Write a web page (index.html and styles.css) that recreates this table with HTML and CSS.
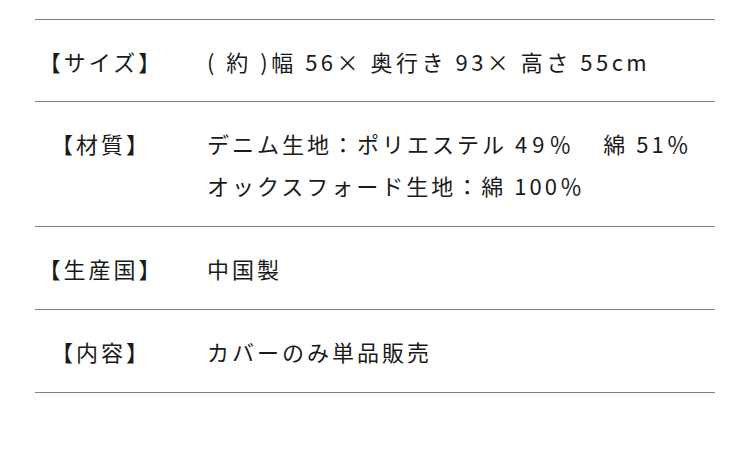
FILE: index.html
```html
<!DOCTYPE html>
<html lang="ja">
<head>
<meta charset="utf-8">
<link rel="stylesheet" href="styles.css">
</head>
<body>
<div class="spec">
  <div class="row row-first">
    <div class="label">【サイズ】</div>
    <div class="value value-wide">( 約 )幅 56× 奥行き 93× 高さ 55cm</div>
  </div>
  <div class="row">
    <div class="label">【材質】</div>
    <div class="value">デニム生地：ポリエステル <span class="num">49％　</span>綿 51％<br>オックスフォード生地：綿 100％</div>
  </div>
  <div class="row">
    <div class="label">【生産国】</div>
    <div class="value">中国製</div>
  </div>
  <div class="row">
    <div class="label">【内容】</div>
    <div class="value">カバーのみ単品販売</div>
  </div>
</div>
</body>
</html>
```
FILE: styles.css
```css
html, body {
  margin: 0;
  padding: 0;
  background: #fff;
}
body {
  font-family: "Noto Sans CJK JP", "Noto Sans", sans-serif;
  color: #1a1a1a;
  font-size: 22px;
  letter-spacing: 3px;
}
.spec {
  margin: 19px 0 0 35px;
  width: 680px;
  border-top: 1px solid #808080;
}
.row {
  display: grid;
  grid-template-columns: 132px 1fr;
  border-bottom: 1px solid #808080;
  padding: 20px 0;
  line-height: 42px;
}
.row-first {
  padding-bottom: 19px;
}
.label {
  text-align: center;
}
.value {
  padding-left: 40px;
}
.value-wide {
  letter-spacing: 3.5px;
}
.num {
  letter-spacing: 5px;
}
```
